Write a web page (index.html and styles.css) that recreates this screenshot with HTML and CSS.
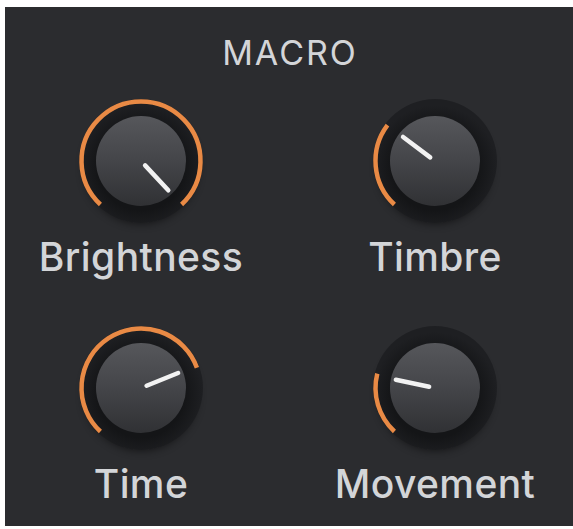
FILE: index.html
```html
<!DOCTYPE html>
<html>
<head>
<meta charset="utf-8">
<link rel="stylesheet" href="styles.css">
</head>
<body>
<svg class="defs" width="0" height="0">
  <defs>
    <linearGradient id="body" x1="0" y1="0" x2="0" y2="1">
      <stop offset="0" stop-color="#56575b"/>
      <stop offset="0.5" stop-color="#444549"/>
      <stop offset="1" stop-color="#303134"/>
    </linearGradient>
    <radialGradient id="ring" cx="0.5" cy="0.55" r="0.5">
      <stop offset="0.7" stop-color="#141517"/>
      <stop offset="1" stop-color="#1e1f22"/>
    </radialGradient>
    <filter id="shadow" x="-50%" y="-50%" width="200%" height="200%">
      <feGaussianBlur stdDeviation="5"/>
    </filter>
  </defs>
</svg>
<div class="panel">
  <div class="title">MACRO</div>
  <div class="grid">
    <div class="cell">
      <svg class="knob" viewBox="-65 -65 130 130">
        <circle cx="0" cy="6" r="56" fill="#111" opacity="0.6" filter="url(#shadow)"/>
        <circle r="62" fill="url(#ring)"/>
        <path d="M -40.58 43.52 A 59.5 59.5 0 1 1 40.58 43.52" class="arc"/>
        <circle r="45" fill="url(#body)"/>
        <line x1="4.09" y1="4.39" x2="27.28" y2="29.26" class="ptr"/>
      </svg>
      <div class="label">Brightness</div>
    </div>
    <div class="cell">
      <svg class="knob" viewBox="-65 -65 130 130">
        <circle cx="0" cy="6" r="56" fill="#111" opacity="0.6" filter="url(#shadow)"/>
        <circle r="62" fill="url(#ring)"/>
        <path d="M -40.58 43.52 A 59.5 59.5 0 0 1 -47.52 -35.81" class="arc"/>
        <circle r="45" fill="url(#body)"/>
        <line x1="-4.79" y1="-3.61" x2="-31.94" y2="-24.07" class="ptr"/>
      </svg>
      <div class="label">Timbre</div>
    </div>
    <div class="cell">
      <svg class="knob" viewBox="-65 -65 130 130">
        <circle cx="0" cy="6" r="56" fill="#111" opacity="0.6" filter="url(#shadow)"/>
        <circle r="62" fill="url(#ring)"/>
        <path d="M -40.58 43.52 A 59.5 59.5 0 1 1 55.91 -20.35" class="arc"/>
        <circle r="45" fill="url(#body)"/>
        <line x1="5.56" y1="-2.25" x2="37.09" y2="-14.98" class="ptr"/>
      </svg>
      <div class="label">Time</div>
    </div>
    <div class="cell">
      <svg class="knob" viewBox="-65 -65 130 130">
        <circle cx="0" cy="6" r="56" fill="#111" opacity="0.6" filter="url(#shadow)"/>
        <circle r="62" fill="url(#ring)"/>
        <path d="M -40.58 43.52 A 59.5 59.5 0 0 1 -57.73 -14.39" class="arc"/>
        <circle r="45" fill="url(#body)"/>
        <line x1="-5.87" y1="-1.25" x2="-39.12" y2="-8.32" class="ptr"/>
      </svg>
      <div class="label">Movement</div>
    </div>
  </div>
</div>
</body>
</html>
```
FILE: styles.css
```css
html, body {
  margin: 0;
  padding: 0;
  background: #ffffff;
}
.defs {
  position: absolute;
  width: 0;
  height: 0;
}
.panel {
  margin: 7px 0 0 5px;
  width: 568px;
  height: 519px;
  background: #2b2c2f;
  box-sizing: border-box;
  padding-top: 26px;
  font-family: Inter, "Noto Sans", sans-serif;
  color: #d3d5d8;
}
.title {
  text-align: center;
  font-size: 34px;
  line-height: 40px;
  letter-spacing: 2px;
  font-weight: 400;
  padding-left: 2px;
}
.grid {
  margin-top: 23px;
  display: grid;
  grid-template-columns: 200px 200px;
  column-gap: 94px;
  row-gap: 44px;
  padding-left: 36px;
}
.cell {
  display: flex;
  flex-direction: column;
  align-items: center;
}
.knob {
  width: 130px;
  height: 130px;
  display: block;
  overflow: visible;
}
.arc {
  fill: none;
  stroke: #e98a45;
  stroke-width: 4.5;
}
.ptr {
  stroke: #f2f2f2;
  stroke-width: 4.5;
  stroke-linecap: round;
}
.label {
  margin-top: 9px;
  font-size: 39px;
  line-height: 44px;
  font-weight: 500;
  letter-spacing: 0.4px;
  white-space: nowrap;
}
```
